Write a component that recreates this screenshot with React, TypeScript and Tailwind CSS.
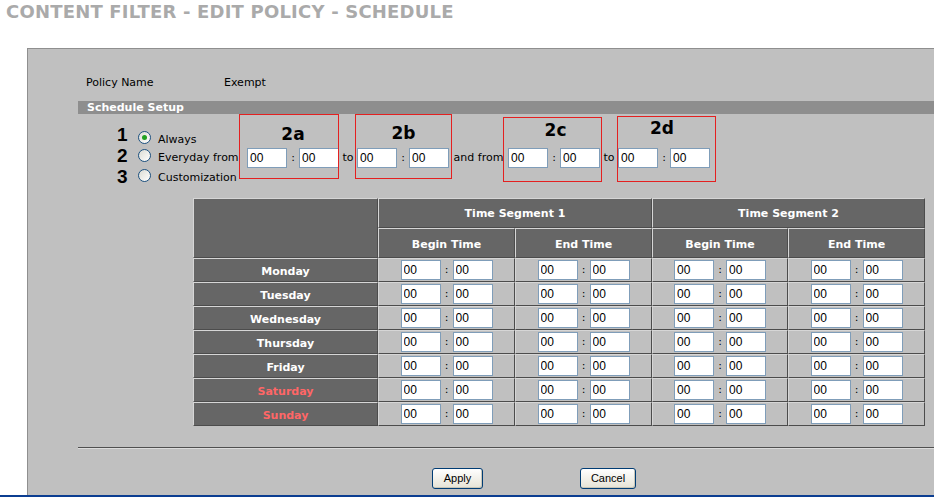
import React from "react";

const DAYS = [
  { name: "Monday", weekend: false },
  { name: "Tuesday", weekend: false },
  { name: "Wednesday", weekend: false },
  { name: "Thursday", weekend: false },
  { name: "Friday", weekend: false },
  { name: "Saturday", weekend: true },
  { name: "Sunday", weekend: true },
];

// cell edges: light on top/left, dark on bottom/right
const CELL =
  "border border-t-[#d6d6d6] border-l-[#d6d6d6] border-b-[#4c4c4c] border-r-[#4c4c4c] p-0";

function TimeInput() {
  return (
    <input
      readOnly
      value="00"
      className="h-[20px] w-[40px] border border-[#7f9db9] bg-white p-0 pl-[2px] font-['Liberation_Sans',sans-serif] text-[12px] text-black outline-none"
    />
  );
}

function TimePair() {
  return (
    <div className="flex items-center">
      <TimeInput />
      <span className="w-[12px] text-center">:</span>
      <TimeInput />
    </div>
  );
}

function Radio({ checked }: { checked?: boolean }) {
  return (
    <span className="-mt-[5px] flex h-[13px] w-[13px] items-center justify-center rounded-full border border-[#1c5180] bg-linear-to-br from-[#dcdcd4] to-white">
      {checked && <span className="h-[5px] w-[5px] rounded-full bg-[#21a121]" />}
    </span>
  );
}

function Box({ label, className, labelClass }: { label: string; className: string; labelClass: string }) {
  return (
    <div className={`absolute border border-[#e42020] ${className}`}>
      <div className={`text-center font-['DejaVu_Sans',sans-serif] text-[17px] leading-[17px] font-bold ${labelClass}`}>
        {label}
      </div>
    </div>
  );
}

export default function App() {
  return (
    <div className="h-[497px] w-[934px] overflow-hidden bg-white font-['DejaVu_Sans',sans-serif] text-[11px] text-black">
      <div className="h-[48px] pl-[6px] pt-[3px] text-[18px] leading-[18px] font-bold tracking-[0.2px] text-[#aaaaaa]">
        CONTENT FILTER - EDIT POLICY - SCHEDULE
      </div>

      <div className="ml-[27px] h-[447px] border-l border-t border-[#8f8f8f] bg-[#c0c0c0] pl-[50px] pt-[27px]">
        <div className="flex h-[14px] items-center pl-[8px] leading-[14px]">
          <span className="w-[138px]">Policy Name</span>
          <span>Exempt</span>
        </div>

        <div className="mt-[11px] h-[13px] bg-[#8e8e8e] pl-[9px] leading-[13px] font-bold text-white">
          Schedule Setup
        </div>

        {/* schedule mode */}
        <div className="relative h-[84px] pl-[39px] pt-[18px]">
          <div className="flex h-[16px] items-center">
            <span className="-mt-[10px] w-[21px] font-['Liberation_Sans',sans-serif] text-[19px] leading-[16px] font-bold">1</span>
            <Radio checked />
            <span className="ml-[7px]">Always</span>
          </div>
          <div className="flex h-[20px] items-center">
            <span className="-mt-[4px] w-[21px] font-['Liberation_Sans',sans-serif] text-[19px] leading-[16px] font-bold">2</span>
            <Radio />
            <span className="ml-[7px] w-[89px]">Everyday from</span>
            <TimePair />
            <span className="w-[18px] text-center">to</span>
            <TimePair />
            <span className="w-[59px] text-center">and from</span>
            <TimePair />
            <span className="w-[18px] text-center">to</span>
            <TimePair />
          </div>
          <div className="mt-[2px] flex h-[16px] items-center">
            <span className="-mt-[3px] w-[21px] font-['Liberation_Sans',sans-serif] text-[19px] leading-[16px] font-bold">3</span>
            <Radio />
            <span className="ml-[7px]">Customization</span>
          </div>

          <Box label="2a" className="left-[161px] top-0 h-[65px] w-[100px]" labelClass="pl-[8px] pt-[11px]" />
          <Box label="2b" className="left-[277px] top-0 h-[65px] w-[97px]" labelClass="pt-[10px]" />
          <Box label="2c" className="left-[425px] top-[3px] h-[65px] w-[99px]" labelClass="pl-[6px] pt-[4px]" />
          <Box label="2d" className="left-[539px] top-[2px] h-[66px] w-[99px]" labelClass="pr-[9px] pt-[3px]" />
        </div>

        {/* day table */}
        <table className="ml-[115px] w-[732px] table-fixed border-separate border-spacing-0 font-bold text-white">
          <colgroup>
            <col className="w-[185px]" />
            <col className="w-[137px]" />
            <col className="w-[137px]" />
            <col className="w-[136px]" />
            <col className="w-[137px]" />
          </colgroup>
          <tbody>
            <tr className="h-[30px]">
              <td rowSpan={2} className={`${CELL} bg-[#666666]`} />
              <td colSpan={2} className={`${CELL} bg-[#666666] pt-[3px] text-center`}>Time Segment 1</td>
              <td colSpan={2} className={`${CELL} bg-[#666666] pt-[3px] text-center`}>Time Segment 2</td>
            </tr>
            <tr className="h-[30px]">
              <td className={`${CELL} bg-[#666666] pt-[4px] text-center`}>Begin Time</td>
              <td className={`${CELL} bg-[#666666] pt-[4px] text-center`}>End Time</td>
              <td className={`${CELL} bg-[#666666] pt-[4px] text-center`}>Begin Time</td>
              <td className={`${CELL} bg-[#666666] pt-[4px] text-center`}>End Time</td>
            </tr>
            {DAYS.map((d) => (
              <tr key={d.name} className="h-[24px]">
                <td className={`${CELL} bg-[#666666] pt-[4px] text-center ${d.weekend ? "text-[#ff6666]" : "text-white"}`}>
                  {d.name}
                </td>
                {[0, 1, 2, 3].map((i) => (
                  <td key={i} className={`${CELL} bg-[#c0c0c0] font-normal text-black`}>
                    <div className="flex justify-center">
                      <TimePair />
                    </div>
                  </td>
                ))}
              </tr>
            ))}
          </tbody>
        </table>

        <div className="mt-[21px] border-t border-b border-t-[#505050] border-b-[#dcdcdc]" />

        <div className="mt-[19px] flex font-['Liberation_Sans',sans-serif]">
          <button className="ml-[354px] h-[21px] w-[51px] rounded-[3px] border border-[#003c74] bg-linear-to-b from-white to-[#e6e3d6] text-[11px] text-black shadow-[inset_-1px_-1px_0_#c9c6b8]">
            Apply
          </button>
          <button className="ml-[97px] h-[21px] w-[56px] rounded-[3px] border border-[#003c74] bg-linear-to-b from-white to-[#e6e3d6] text-[11px] text-black shadow-[inset_-1px_-1px_0_#c9c6b8]">
            Cancel
          </button>
        </div>
      </div>

      <div className="h-[2px] bg-[#0b3d91]" />
    </div>
  );
}
